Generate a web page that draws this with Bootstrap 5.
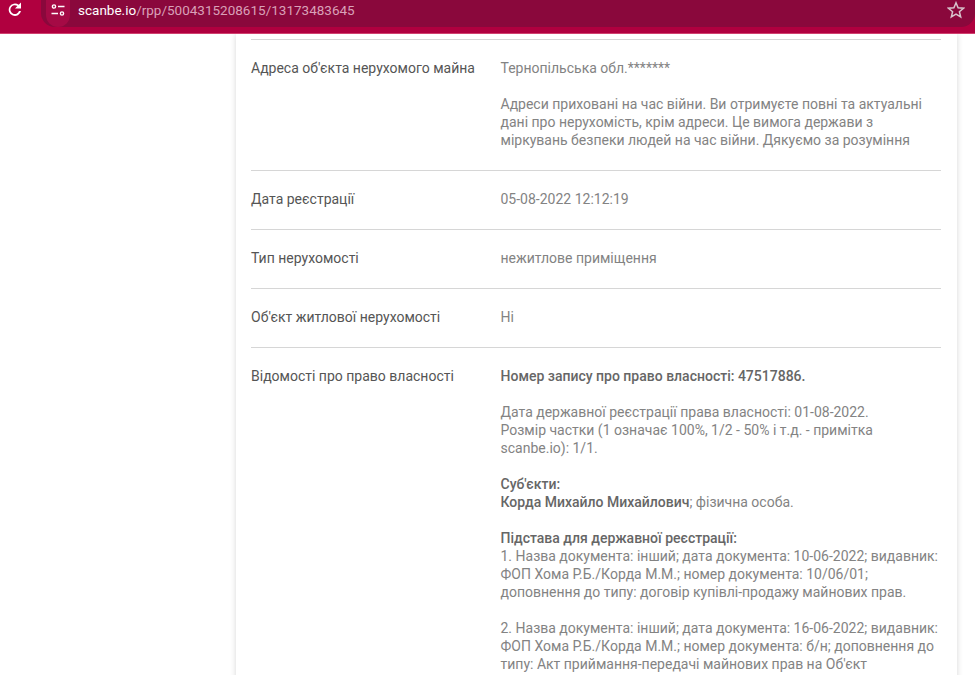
<!DOCTYPE html>
<html lang="uk">
<head>
<meta charset="utf-8">
<title>scanbe.io</title>
<link href="https://cdn.jsdelivr.net/npm/bootstrap@5.3.0/dist/css/bootstrap.min.css" rel="stylesheet">
<style>
html,body{height:675px;overflow:hidden;background:#fff;}
body{font-family:Roboto,"Liberation Sans",sans-serif;}
.tb{height:34px;background:#b0003f;border-bottom:1px solid #d0406f;}
.tb-reload{width:41px;height:27px;padding-left:7px;padding-top:1px;}
.omni{height:27px;background:#8a083c;border-radius:0 0 14px 14px;padding-left:5px;}
.tune{width:24px;height:27px;background:#a50a45;border-radius:0 0 12px 12px;margin-right:8px;flex:none;}
.url{font-size:13.5px;line-height:20px;color:#d9a0b8;margin-top:-7px;}
.url b{font-weight:400;color:#fff;}
.star{width:18px;height:18px;margin-right:10px;margin-top:-7px;}
.pg{height:641px;overflow:hidden;background:#fff;}
.sheet{margin-left:236px;width:721px;min-height:700px;padding:5px 16px 0 15px;border:0;border-radius:0;box-shadow:0 0 6px rgba(0,0,0,.16);}
.rw{border-top:1px solid #d6d6d6;padding:19px 0 21px;font-size:14px;line-height:18px;}
.lbl{width:249.5px;flex:none;color:#555;font-weight:400;}
.val{width:440.5px;flex:none;color:#838383;font-weight:400;}
.val b{font-weight:500;color:#666;}
.val p{margin:0 0 18px;}
</style>
</head>
<body>
<div class="tb d-flex">
  <div class="tb-reload d-flex">
    <svg width="16" height="16" viewBox="0 0 16 16"><path d="M14 1.5V7.5H8L10.4 5.1A4.4 4.4 0 1 0 12 10H14A6.2 6.2 0 1 1 11.7 3.8Z" fill="#fff"/></svg>
  </div>
  <div class="omni flex-grow-1 d-flex align-items-center">
    <div class="tune d-flex align-items-center justify-content-center">
      <svg width="14" height="12" viewBox="0 0 14 12" class="mb-2"><g fill="none" stroke="#fff" stroke-width="1.4"><circle cx="3" cy="2.5" r="1.6"/><path d="M7 2.5H13.5M.5 9.5H7"/><circle cx="11" cy="9.5" r="1.6"/></g></svg>
    </div>
    <div class="url flex-grow-1"><b>scanbe.io</b>/rpp/5004315208615/13173483645</div>
    <svg class="star" viewBox="0 0 18 18"><path d="M9 1.8L11.1 6.8L16.5 7.2L12.4 10.7L13.7 16L9 13.2L4.3 16L5.6 10.7L1.5 7.2L6.9 6.8Z" fill="none" stroke="#d8c4cc" stroke-width="1.5"/></svg>
  </div>
</div>
<div class="pg">
  <div class="card sheet">
    <div class="rw d-flex"><div class="lbl">Адреса об'єкта нерухомого майна</div><div class="val"><p>Тернопільська обл.*******</p>Адреси приховані на час війни. Ви отримуєте повні та актуальні дані про нерухомість, крім адреси. Це вимога держави з міркувань безпеки людей на час війни. Дякуємо за розуміння</div></div>
    <div class="rw d-flex"><div class="lbl">Дата реєстрації</div><div class="val">05-08-2022 12:12:19</div></div>
    <div class="rw d-flex"><div class="lbl">Тип нерухомості</div><div class="val">нежитлове приміщення</div></div>
    <div class="rw d-flex"><div class="lbl">Об'єкт житлової нерухомості</div><div class="val">Ні</div></div>
    <div class="rw d-flex"><div class="lbl">Відомості про право власності</div><div class="val">
      <p><b>Номер запису про право власності: 47517886.</b></p>
      <p>Дата державної реєстрації права власності: 01-08-2022.<br>Розмір частки (1 означає 100%, 1/2 - 50% і т.д. - примітка scanbe.io): 1/1.</p>
      <p><b>Суб'єкти:</b><br><b>Корда Михайло Михайлович</b>; фізична особа.</p>
      <p><b>Підстава для державної реєстрації:</b><br>1. Назва документа: інший; дата документа: 10-06-2022; видавник: ФОП Хома Р.Б./Корда М.М.; номер документа: 10/06/01; доповнення до типу: договір купівлі-продажу майнових прав.</p>
      <p>2. Назва документа: інший; дата документа: 16-06-2022; видавник: ФОП Хома Р.Б./Корда М.М.; номер документа: б/н; доповнення до типу: Акт приймання-передачі майнових прав на Об'єкт</p>
    </div></div>
  </div>
</div>
</body>
</html>
